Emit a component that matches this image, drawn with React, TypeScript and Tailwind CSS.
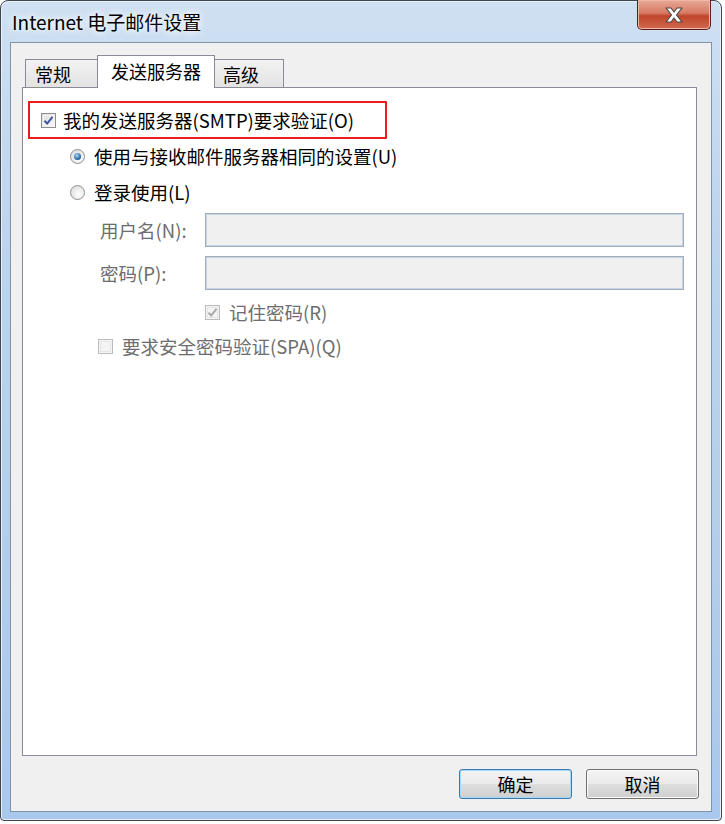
import React from "react";

const font = { fontFamily: '"Noto Sans CJK SC", "Noto Sans", sans-serif' };

function Check({ checked, disabled }: { checked?: boolean; disabled?: boolean }) {
  return (
    <span
      className={`relative inline-flex h-[15px] w-[15px] shrink-0 items-center justify-center border ${
        disabled ? "border-[#bcbcbc] bg-[#f4f4f4]" : "border-[#8e8f8f] bg-[linear-gradient(135deg,#dcdcdc,#fbfbfb)]"
      }`}
    >
      <span className={`absolute inset-[1px] border ${disabled ? "border-[#e6e6e6]" : "border-[#f4f4f4]"}`} />
      {checked && (
        <svg width="11" height="11" viewBox="0 0 11 11" className="relative">
          <path
            d="M1.5 5.8 L4.2 8.6 L9.5 1.8"
            fill="none"
            stroke={disabled ? "#a9a9a9" : "#3b57a3"}
            strokeWidth="2"
          />
        </svg>
      )}
    </span>
  );
}

function Radio({ checked }: { checked?: boolean }) {
  return (
    <span className="relative inline-flex h-[15px] w-[15px] shrink-0 items-center justify-center rounded-full border border-[#8e8f8f] bg-[radial-gradient(circle_at_60%_65%,#ffffff,#d6d6d6)]">
      {checked && (
        <span className="h-[7px] w-[7px] rounded-full bg-[radial-gradient(circle_at_40%_35%,#a6d6f5,#1c5f9f_70%,#0f3e73)]" />
      )}
    </span>
  );
}

function Btn({ label, focused }: { label: string; focused?: boolean }) {
  return (
    <div
      className={`flex h-[30px] w-[113px] items-center justify-center rounded-[3px] border text-[18px] leading-none text-black ${
        focused
          ? "border-[#3d7bad] shadow-[inset_0_0_0_1px_#9fdbf6]"
          : "border-[#707070] shadow-[inset_0_0_0_1px_#fbfbfb]"
      } bg-[linear-gradient(#f3f3f3_0%,#ebebeb_48%,#dddddd_52%,#cfcfcf_100%)]`}
    >
      {label}
    </div>
  );
}

export default function App() {
  return (
    <div className="h-[824px] w-[725px] overflow-hidden bg-white" style={font}>
      <div className="flex h-[821px] w-[722px] flex-col rounded-t-[8px] rounded-b-[4px] border border-[#3f4650] bg-[linear-gradient(180deg,#cfe0f2_0%,#bcd4ee_30%,#b3cdea_70%,#a9c8ee_100%)] px-[9px] pb-[8px] shadow-[inset_0_0_0_1px_#e6f0fb]">
        {/* title bar */}
        <div className="relative flex h-[41px] shrink-0 items-center">
          <span className="pl-[2px] text-[19px] leading-none text-black [text-shadow:0_0_6px_#ffffff,0_0_10px_#ffffff]">
            Internet 电子邮件设置
          </span>
          <div className="absolute right-[1px] top-[-1px] flex h-[30px] w-[74px] items-center justify-center rounded-b-[5px] border border-t-0 border-[#5b1f16] bg-[linear-gradient(180deg,#e9a898_0%,#d67a63_45%,#c0452b_55%,#cf6a4e_100%)] shadow-[inset_0_0_0_1px_#f0b7a6]">
            <svg width="24" height="18" viewBox="0 0 24 18">
              <path
                d="M4 2 L9 2 L12 6 L15 2 L20 2 L14.5 9 L20 16 L15 16 L12 12 L9 16 L4 16 L9.5 9 Z"
                fill="#ffffff"
                stroke="#4a4a4a"
                strokeWidth="1.2"
                strokeLinejoin="round"
              />
            </svg>
          </div>
        </div>
        {/* client area */}
        <div className="flex flex-1 flex-col border border-[#8293a8] bg-[#f0f0f0] pl-[11px] pr-[14px] pt-[12px]">
          {/* tabs */}
          <div className="flex h-[32px] items-end pl-[3px]">
            <div className="flex h-[28px] w-[73px] items-center border border-b-0 border-[#898c95] bg-[linear-gradient(#f2f2f2,#e3e3e3)] pl-[9px] text-[18px] leading-none text-black">
              常规
            </div>
            <div className="relative z-10 -mx-[1px] mb-[-1px] flex h-[33px] w-[118px] items-center justify-center border border-b-0 border-[#898c95] bg-white pb-[3px] text-[18px] leading-none text-black">
              发送服务器
            </div>
            <div className="flex h-[28px] w-[70px] items-center border border-b-0 border-[#898c95] bg-[linear-gradient(#f2f2f2,#e3e3e3)] pl-[8px] text-[18px] leading-none text-black">
              高级
            </div>
          </div>
          {/* panel */}
          <div className="flex h-[669px] flex-col border border-[#898c95] bg-white pl-[5px] text-[18.5px] leading-none">
            <div className="mt-[13px] flex h-[38px] w-[359px] items-center border-2 border-[#ee1c1c] pl-[11px]">
              <Check checked />
              <span className="ml-[7px] text-black">我的发送服务器(SMTP)要求验证(O)</span>
            </div>
            <div className="ml-[42px] mt-[5px] flex h-[24px] items-center">
              <Radio checked />
              <span className="ml-[9px] text-black">使用与接收邮件服务器相同的设置(U)</span>
            </div>
            <div className="ml-[42px] mt-[12px] flex h-[24px] items-center">
              <Radio />
              <span className="ml-[9px] text-black">登录使用(L)</span>
            </div>
            <div className="ml-[72px] mt-[9px] flex h-[34px] items-center">
              <span className="w-[105px] text-[#6d6d6d]">用户名(N):</span>
              <div className="h-[34px] w-[479px] border border-[#a4acb6] bg-[#f0f0f0] shadow-[inset_0_0_0_1px_#c3d6ee]" />
            </div>
            <div className="ml-[72px] mt-[9px] flex h-[34px] items-center">
              <span className="w-[105px] text-[#6d6d6d]">密码(P):</span>
              <div className="h-[34px] w-[479px] border border-[#a4acb6] bg-[#f0f0f0] shadow-[inset_0_0_0_1px_#c3d6ee]" />
            </div>
            <div className="ml-[177px] mt-[10px] flex h-[24px] items-center">
              <Check checked disabled />
              <span className="ml-[9px] text-[#6d6d6d]">记住密码(R)</span>
            </div>
            <div className="ml-[70px] mt-[10px] flex h-[24px] items-center">
              <Check disabled />
              <span className="ml-[9px] text-[#6d6d6d]">要求安全密码验证(SPA)(Q)</span>
            </div>
          </div>
          {/* buttons */}
          <div className="mt-[13px] flex justify-end gap-[14px]">
            <Btn label="确定" focused />
            <div className="-mr-[2px]">
              <Btn label="取消" />
            </div>
          </div>
        </div>
      </div>
    </div>
  );
}
